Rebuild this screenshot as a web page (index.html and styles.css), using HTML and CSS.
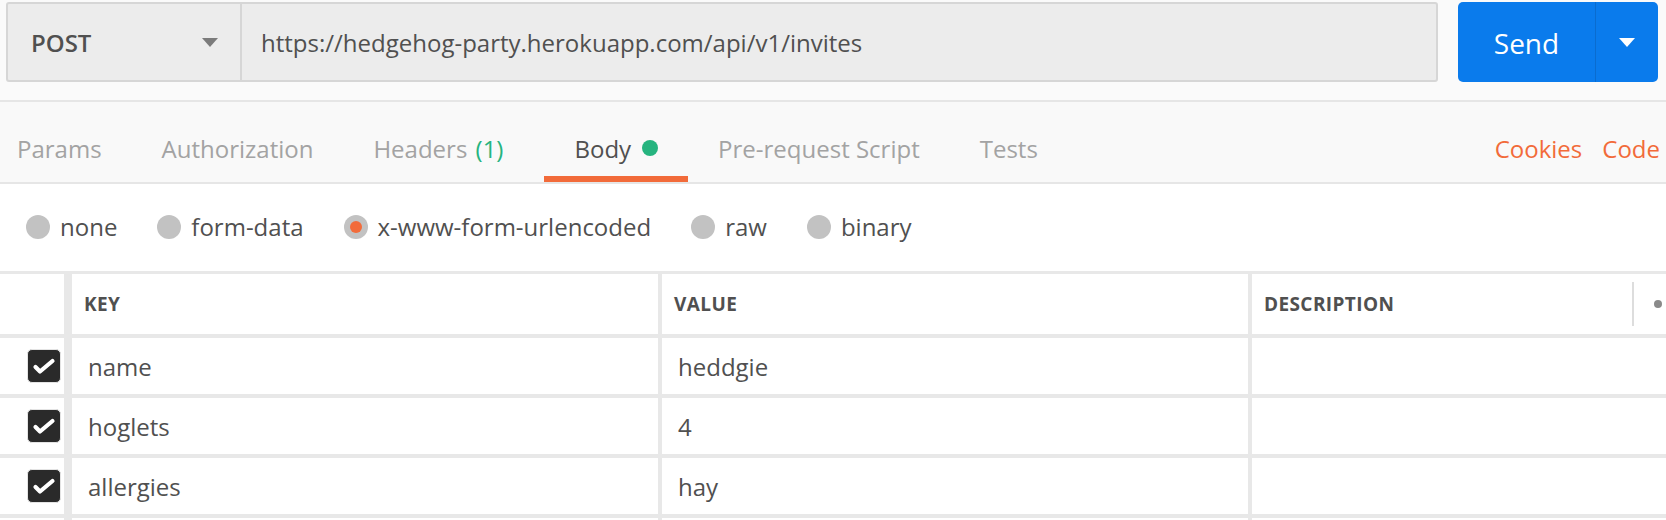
FILE: index.html
```html
<!DOCTYPE html>
<html>
<head>
<meta charset="utf-8">
<link rel="stylesheet" href="styles.css">
</head>
<body>
<div class="page">
  <div class="request-bar">
    <div class="url-group">
      <div class="method">
        <span class="method-name">POST</span>
        <span class="caret caret-gray"></span>
      </div>
      <div class="url">https://hedgehog-party.herokuapp.com/api/v1/invites</div>
    </div>
    <div class="send-group">
      <div class="send-main">Send</div>
      <div class="send-drop"><span class="caret caret-white"></span></div>
    </div>
  </div>

  <div class="tabs">
    <div class="tab">Params</div>
    <div class="tab">Authorization</div>
    <div class="tab tab-headers">Headers <span class="count">(1)</span></div>
    <div class="tab active">Body<span class="dot"></span></div>
    <div class="tab">Pre-request Script</div>
    <div class="tab">Tests</div>
    <div class="tab-links">
      <span class="link">Cookies</span>
      <span class="link">Code</span>
    </div>
  </div>

  <div class="body-modes">
    <label class="mode"><span class="radio"></span>none</label>
    <label class="mode"><span class="radio"></span>form-data</label>
    <label class="mode"><span class="radio checked"></span>x-www-form-urlencoded</label>
    <label class="mode"><span class="radio"></span>raw</label>
    <label class="mode"><span class="radio"></span>binary</label>
  </div>

  <div class="kv-table">
    <div class="kv-row head">
      <div class="cell check-cell"></div>
      <div class="cell key">KEY</div>
      <div class="cell val">VALUE</div>
      <div class="cell desc">DESCRIPTION<span class="head-tools"><span class="vbar"></span><span class="small-dot"></span></span></div>
    </div>
    <div class="kv-row">
      <div class="cell check-cell"><span class="checkbox"><svg viewBox="0 0 34 34" width="34" height="34"><path d="M8.5 18 L13 22.5 L25.5 12" fill="none" stroke="#fff" stroke-width="4.2" stroke-linecap="round" stroke-linejoin="round"/></svg></span></div>
      <div class="cell key">name</div>
      <div class="cell val">heddgie</div>
      <div class="cell desc"></div>
    </div>
    <div class="kv-row">
      <div class="cell check-cell"><span class="checkbox"><svg viewBox="0 0 34 34" width="34" height="34"><path d="M8.5 18 L13 22.5 L25.5 12" fill="none" stroke="#fff" stroke-width="4.2" stroke-linecap="round" stroke-linejoin="round"/></svg></span></div>
      <div class="cell key">hoglets</div>
      <div class="cell val">4</div>
      <div class="cell desc"></div>
    </div>
    <div class="kv-row">
      <div class="cell check-cell"><span class="checkbox"><svg viewBox="0 0 34 34" width="34" height="34"><path d="M8.5 18 L13 22.5 L25.5 12" fill="none" stroke="#fff" stroke-width="4.2" stroke-linecap="round" stroke-linejoin="round"/></svg></span></div>
      <div class="cell key">allergies</div>
      <div class="cell val">hay</div>
      <div class="cell desc"></div>
    </div>
    <div class="kv-row">
      <div class="cell check-cell"></div>
      <div class="cell key"></div>
      <div class="cell val"></div>
      <div class="cell desc"></div>
    </div>
  </div>
</div>
</body>
</html>
```

FILE: styles.css
```css
* { box-sizing: border-box; }
html, body {
  margin: 0;
  padding: 0;
  background: #ffffff;
  font-family: "Open Sans", "Liberation Sans", sans-serif;
  color: #505050;
  overflow: hidden;
}
.page { width: 1666px; height: 520px; overflow: hidden; }

.request-bar {
  display: flex;
  height: 102px;
  padding: 2px 8px 0 6px;
  background: #fafafa;
  border-bottom: 2px solid #e6e6e6;
}
.url-group {
  flex: 1;
  height: 80px;
  display: flex;
  background: #ececec;
  border: 2px solid #d6d6d6;
  border-radius: 3px;
}
.method {
  width: 234px;
  flex: none;
  display: flex;
  align-items: center;
  justify-content: space-between;
  padding: 0 22px 0 23px;
  border-right: 2px solid #d6d6d6;
  font-size: 24px;
  font-weight: 600;
}
.url {
  display: flex;
  align-items: center;
  padding-left: 19px;
  font-size: 24px;
}
.caret {
  width: 0;
  height: 0;
  border-left: 8px solid transparent;
  border-right: 8px solid transparent;
}
.caret-gray { border-top: 9px solid #7b7b7b; }
.caret-white { border-top: 9px solid #ffffff; }

.send-group {
  margin-left: 20px;
  width: 200px;
  height: 80px;
  display: flex;
  background: #0a7bec;
  border-radius: 5px;
  color: #fff;
}
.send-main {
  width: 138px;
  display: flex;
  align-items: center;
  justify-content: center;
  font-size: 28px;
  padding-top: 2px;
  border-right: 1px solid #0a6ccf;
}
.send-drop {
  flex: 1;
  display: flex;
  align-items: center;
  justify-content: center;
}

.tabs {
  display: flex;
  height: 82px;
  background: #f9f9f9;
  border-bottom: 2px solid #e6e6e6;
  font-size: 24px;
}
.tab {
  display: flex;
  align-items: center;
  padding: 18px 30px 0;
  color: #a3a3a3;
  border-bottom: 6px solid transparent;
  white-space: pre;
}
.tab:first-child { padding-left: 17px; }
.tab.tab-headers { padding-right: 41px; }
.tab .count { color: #26b47f; margin-left: 2px; }
.tab.active {
  color: #505050;
  border-bottom-color: #f26b3a;
}
.tab .dot {
  width: 16px;
  height: 16px;
  border-radius: 50%;
  background: #26b47f;
  margin-left: 11px;
}
.tab-links {
  margin-left: auto;
  display: flex;
  align-items: center;
  gap: 20px;
  padding: 18px 6px 0 0;
  border-bottom: 6px solid transparent;
  color: #f26b3a;
}

.body-modes {
  display: flex;
  align-items: center;
  gap: 40px;
  height: 87px;
  padding: 0 0 2px 26px;
  font-size: 24px;
}
.mode {
  display: flex;
  align-items: center;
  gap: 10px;
}
.radio {
  width: 24px;
  height: 24px;
  border-radius: 50%;
  background: #c2c2c2;
  display: flex;
  align-items: center;
  justify-content: center;
}
.radio.checked::after {
  content: "";
  width: 12px;
  height: 12px;
  border-radius: 50%;
  background: #f26b3a;
}

.kv-table {
  border-top: 3px solid #e8e8e8;
}
.kv-row {
  display: flex;
  height: 60px;
  border-bottom: 4px solid #e8e8e8;
  font-size: 24px;
}
.kv-row.head {
  height: 64px;
  font-size: 19px;
  font-weight: 700;
  letter-spacing: 0.4px;
}
.cell {
  display: flex;
  align-items: center;
  border-right: 4px solid #e8e8e8;
  padding-left: 16px;
}
.head .cell { padding-left: 12px; }
.check-cell {
  width: 72px;
  flex: none;
  justify-content: flex-end;
  border-right-width: 8px;
  padding: 0 3px 0 0 !important;
}
.key { width: 590px; flex: none; }
.val { width: 590px; flex: none; }
.desc { flex: 1; border-right: none; position: relative; }
.head-tools {
  margin-left: auto;
  display: flex;
  align-items: center;
  height: 100%;
}
.vbar {
  width: 2px;
  height: 44px;
  background: #dddddd;
  margin-right: 20px;
}
.small-dot {
  width: 8px;
  height: 8px;
  border-radius: 50%;
  background: #8a8a8a;
  margin-right: 4px;
}
.checkbox {
  width: 34px;
  height: 34px;
  border-radius: 5px;
  background: #2a2a2a;
  border: 1px solid #e4e4e4;
  display: flex;
  align-items: center;
  justify-content: center;
  overflow: hidden;
}
.checkbox svg { display: block; flex: none; }
```
